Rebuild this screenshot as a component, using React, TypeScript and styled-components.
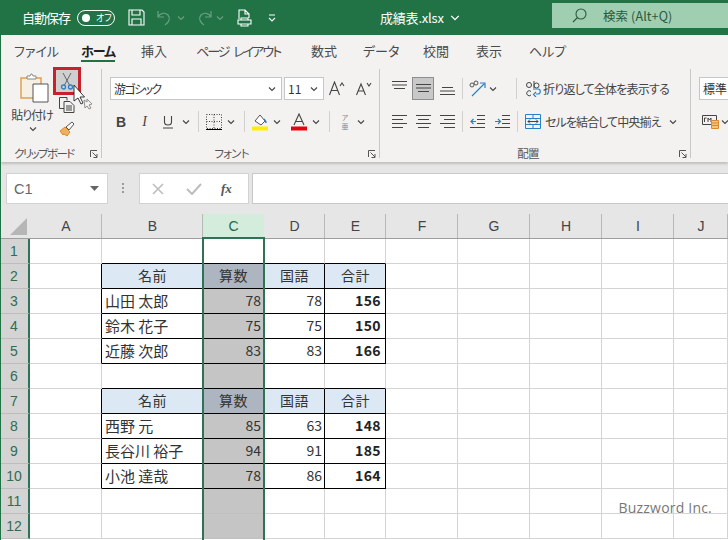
import React from 'react';
import styled, { createGlobalStyle } from 'styled-components';

const GlobalStyle = createGlobalStyle`
  html, body {
    margin: 0;
    width: 728px;
    height: 540px;
    overflow: hidden;
    background: #fff;
  }
  * {
    box-sizing: border-box;
  }
`;

const JP = `"Noto Sans CJK JP", "Liberation Sans", sans-serif`;
const GREEN = '#217346';
const EDGE = '#2f7356';

const Window = styled.div`
  position: relative;
  width: 728px;
  height: 540px;
  overflow: hidden;
  display: flex;
  flex-direction: column;
  border-left: 1px solid ${GREEN};
  font-family: ${JP};
  font-feature-settings: 'palt';
  color: #444;
`;

const TitleBar = styled.div`
  height: 35px;
  margin-left: -1px;
  background: ${GREEN};
  display: flex;
  align-items: center;
  color: #fff;
  flex-shrink: 0;
`;

const TitleText = styled.span<{ $ml: number; $w: number; $spacing?: number }>`
  margin-left: ${(p) => p.$ml}px;
  width: ${(p) => p.$w}px;
  font-size: 13px;
  letter-spacing: ${(p) => p.$spacing ?? 0}px;
  white-space: nowrap;
  line-height: 16px;
  display: flex;
  align-items: center;
  gap: 6px;
`;

const Toggle = styled.div`
  margin-left: 7px;
  width: 38px;
  height: 16px;
  border: 1.2px solid #fff;
  border-radius: 8px;
  display: flex;
  align-items: center;
  padding-left: 4px;
  font-size: 9px;
  gap: 6px;
`;

const Knob = styled.i`
  width: 8px;
  height: 8px;
  border-radius: 50%;
  background: #fff;
`;

const TitleIcon = styled.div<{ $ml: number; $w: number; $dim?: boolean }>`
  margin-left: ${(p) => p.$ml}px;
  width: ${(p) => p.$w}px;
  height: 18px;
  display: flex;
  align-items: center;
  justify-content: center;
  opacity: ${(p) => (p.$dim ? 0.32 : 1)};
`;

const SearchBox = styled.div`
  margin-left: auto;
  width: 176px;
  height: 25px;
  margin-top: -5px;
  background: #9fcfb0;
  color: #2a5a40;
  display: flex;
  align-items: center;
  padding-left: 20px;
  font-size: 12.5px;
`;

const SearchLabel = styled.span`
  margin-left: 16px;
  letter-spacing: 0.1px;
`;

const TabBar = styled.div`
  height: 28px;
  background: #f3f2f1;
  display: flex;
  flex-shrink: 0;
  padding-left: 13px;
  font-size: 13px;
`;

const Tab = styled.div<{ $active?: boolean; $w: number; $spacing: number }>`
  width: ${(p) => p.$w}px;
  height: 28px;
  padding-top: 6px;
  line-height: 20px;
  white-space: nowrap;
  letter-spacing: ${(p) => p.$spacing}px;
  word-spacing: 4px;
  font-weight: ${(p) => (p.$active ? 700 : 400)};
  color: ${(p) => (p.$active ? '#222' : '#4a4a4a')};
  position: relative;
  &::after {
    content: '';
    display: ${(p) => (p.$active ? 'block' : 'none')};
    position: absolute;
    left: 0;
    top: 25px;
    width: 34px;
    height: 2px;
    background: ${GREEN};
  }
`;

const Ribbon = styled.div`
  height: 99px;
  padding: 6px 0 4px;
  background: #f3f2f1;
  display: flex;
  flex-shrink: 0;
  box-shadow: 0 2px 2px rgba(0, 0, 0, 0.16);
  position: relative;
  z-index: 1;
`;

const Group = styled.div<{ $w: number; $noEdge?: boolean }>`
  width: ${(p) => p.$w}px;
  height: 89px;
  flex-shrink: 0;
  border-right: ${(p) => (p.$noEdge ? 'none' : '1px solid #c8c8c8')};
  display: flex;
  flex-direction: column;
  position: relative;
`;

const GroupBody = styled.div`
  flex: 1;
  min-height: 0;
  display: flex;
  flex-direction: column;
  gap: 10px;
  padding: 8px 0 0 8px;
`;

const ClipBody = styled.div`
  flex: 1;
  min-height: 0;
  display: flex;
`;

const PasteColumn = styled.div`
  width: 52px;
  display: flex;
  flex-direction: column;
  align-items: center;
  padding: 4px 0 0 10px;
  font-size: 12px;
  line-height: 14px;
`;

const PasteIcon = styled.svg`
  margin-left: 4px;
  flex-shrink: 0;
`;

const PasteLabel = styled.span`
  margin-top: 5px;
  letter-spacing: -1px;
  white-space: nowrap;
`;

const PasteChevron = styled.div`
  height: 14px;
  margin-left: 2px;
  display: flex;
  align-items: center;
`;

const SmallTools = styled.div`
  width: 28px;
  margin-top: -2px;
  display: flex;
  flex-direction: column;
  align-items: center;
`;

const CutButton = styled.div`
  width: 28px;
  height: 28px;
  border: 3px solid #c8202c;
  background: #cfcfcf;
  display: flex;
  align-items: center;
  justify-content: center;
`;

const SmallTool = styled.div<{ $mt: number }>`
  margin-top: ${(p) => p.$mt}px;
  height: 16px;
  display: flex;
`;

const Row = styled.div`
  display: flex;
  align-items: center;
  height: 23px;
  flex-shrink: 0;
  font-size: 12px;
`;

const Slot = styled.div<{ $w: number; $ml?: number }>`
  width: ${(p) => p.$w}px;
  margin-left: ${(p) => p.$ml ?? 0}px;
  height: 23px;
  flex-shrink: 0;
  display: flex;
  align-items: center;
  justify-content: center;
`;

const BoldGlyph = styled(Slot)`
  font: 700 14px 'Liberation Sans', sans-serif;
`;

const ItalicGlyph = styled(Slot)`
  font: italic 14px 'Liberation Serif', serif;
`;

const RubyGlyph = styled(Slot)`
  flex-direction: column;
  gap: 2px;
  font-size: 7px;
  line-height: 7px;
  color: #888;
`;

const Sep = styled.div<{ $ml: number }>`
  width: 1px;
  height: 21px;
  margin-left: ${(p) => p.$ml}px;
  background: #d0d0d0;
  flex-shrink: 0;
`;

const Combo = styled.div<{ $w: number; $ml?: number }>`
  width: ${(p) => p.$w}px;
  margin-left: ${(p) => p.$ml ?? 0}px;
  height: 23px;
  background: #fff;
  border: 1px solid #c6c6c6;
  display: flex;
  align-items: center;
  justify-content: space-between;
  padding: 0 5px 0 2px;
  font-size: 12px;
  color: #333;
  flex-shrink: 0;
  white-space: nowrap;
`;

const ComboText = styled.span<{ $spacing?: number }>`
  margin-left: 1px;
  letter-spacing: ${(p) => p.$spacing ?? 0}px;
`;

const Pressed = styled(Slot)`
  background: #c8c8c8;
  border: 1px solid #8e8e8e;
`;

const RibbonText = styled.span<{ $ml?: number; $w: number; $spacing: number }>`
  margin-left: ${(p) => p.$ml ?? 0}px;
  width: ${(p) => p.$w}px;
  flex-shrink: 0;
  font-size: 12px;
  white-space: nowrap;
  letter-spacing: ${(p) => p.$spacing}px;
`;

const GroupLabel = styled.div<{ $pr: number }>`
  height: 10px;
  line-height: 10px;
  font-size: 11.5px;
  padding-right: ${(p) => p.$pr}px;
  letter-spacing: -0.8px;
  text-align: center;
  white-space: nowrap;
  color: #555;
  position: relative;
`;

const ClipLabel = styled(GroupLabel)`
  text-align: left;
  padding-left: 13px;
  letter-spacing: -1.6px;
`;

const Launcher = styled.svg`
  position: absolute;
  right: 3px;
  top: 2px;
`;

const CursorOverlay = styled.svg`
  position: absolute;
  left: 72px;
  top: 84px;
  z-index: 3;
`;

const FormulaBar = styled.div`
  height: 52px;
  flex-shrink: 0;
  background: #e6e6e6;
  padding: 11px 0 0 5px;
  display: flex;
  align-items: flex-start;
`;

const NameBox = styled.div`
  width: 102px;
  height: 31px;
  background: #fff;
  border: 1px solid #d2d2d2;
  display: flex;
  align-items: center;
  justify-content: space-between;
  padding: 0 8px 0 7px;
  font: 14.5px 'Liberation Sans', sans-serif;
  color: #666;
`;

const Dots = styled.div`
  width: 31px;
  height: 31px;
  display: flex;
  align-items: center;
  justify-content: center;
`;

const FormulaButtons = styled.div`
  width: 110px;
  height: 31px;
  background: #fff;
  border: 1px solid #d2d2d2;
  display: flex;
  align-items: center;
  padding-left: 9px;
  gap: 18px;
`;

const FxLabel = styled.i`
  font: italic 700 13px 'Liberation Serif', serif;
  color: #555;
`;

const FormulaInput = styled.div`
  margin-left: 3px;
  flex: 1;
  height: 31px;
  background: #fff;
  border: 1px solid #c8c8c8;
  border-right: none;
`;

const Sheet = styled.div`
  position: relative;
  flex: 1;
  display: grid;
  grid-template-columns: 29px 72px 101px 61px 61px 61px 72px 72px 72px 72px 54px;
  grid-template-rows: repeat(13, 25px);
  background: #fff;
`;

const Corner = styled.div`
  background: #e6e6e6;
  border-bottom: 1px solid #9e9e9e;
  display: flex;
  align-items: flex-end;
  justify-content: flex-end;
  padding: 0 3px 3px 0;
`;

const ColHead = styled.div<{ $active?: boolean }>`
  background: ${(p) => (p.$active ? '#d3ecdc' : '#e6e6e6')};
  color: ${(p) => (p.$active ? '#1f6a48' : '#444')};
  border-bottom: 1px solid #9e9e9e;
  font: 14px 'Liberation Sans', sans-serif;
  display: flex;
  align-items: center;
  justify-content: center;
  padding-bottom: 1px;
  position: relative;
  &::after {
    content: '';
    position: absolute;
    right: 0;
    bottom: 0;
    width: 1px;
    height: 24px;
    background: ${(p) => (p.$active ? '#d3ecdc' : '#b8b8b8')};
  }
`;

const RowHead = styled.div`
  background: #d4d4d4;
  color: #2f6d50;
  border-right: 2px solid ${EDGE};
  border-bottom: 1px solid #bdbdbd;
  font: 14px 'Liberation Sans', sans-serif;
  display: flex;
  align-items: center;
  justify-content: center;
  padding: 0 1px 1px 0;
`;

type Tone = 'plain' | 'head' | 'selected' | 'selectedHead';

const toneColor: Record<Tone, string> = {
  plain: 'transparent',
  head: '#dce9f5',
  selected: '#c5c5c5',
  selectedHead: '#adb5c1',
};

const Cell = styled.div<{
  $tone: Tone;
  $align: 'left' | 'right' | 'center';
  $bold?: boolean;
  $right?: boolean;
  $bottom?: boolean;
  $hideGrid?: boolean;
}>`
  background: ${(p) => toneColor[p.$tone]};
  border-right: 1px solid ${(p) => (p.$right ? '#000' : p.$hideGrid ? 'transparent' : '#d4d4d4')};
  border-bottom: 1px solid ${(p) => (p.$bottom ? '#000' : p.$hideGrid ? '#c0c0c0' : '#d4d4d4')};
  display: flex;
  align-items: center;
  justify-content: ${(p) =>
    p.$align === 'left' ? 'flex-start' : p.$align === 'right' ? 'flex-end' : 'center'};
  padding: 0 ${(p) => (p.$bold ? 4 : 2)}px 2px 3px;
  font-size: ${(p) => (p.$align === 'left' ? 15 : 14)}px;
  font-weight: ${(p) => (p.$bold ? 700 : 400)};
  letter-spacing: ${(p) => (p.$bold ? '0.4px' : p.$align === 'center' ? '0.6px' : '0')};
  color: ${(p) => (p.$bold ? '#222' : '#333')};
  font-feature-settings: normal;
  white-space: nowrap;
`;

const Marquee = styled.div`
  position: absolute;
  left: 201px;
  top: 23px;
  bottom: 0;
  width: 63px;
  border: 2px solid ${EDGE};
  border-bottom: none;
  pointer-events: none;
`;

const Watermark = styled.div`
  position: absolute;
  right: 16px;
  bottom: 23px;
  font: 14px 'Open Sans', sans-serif;
  color: #777;
  letter-spacing: 0.2px;
  text-shadow: 0 0 2px #fff;
  z-index: 2;
`;

const Chevron = ({ color = '#444', size = 8 }: { color?: string; size?: number }) => (
  <svg width={size} height={size * 0.75} viewBox="0 0 8 6" fill="none" stroke={color} strokeWidth="1.1">
    <path d="M1 1.5 4 4.5 7 1.5" />
  </svg>
);

const Lines = ({ widths, top = 0 }: { widths: number[]; top?: number }) => (
  <svg width="15" height="15" viewBox="0 0 15 15" stroke="#444" strokeWidth="1">
    {widths.map((w, i) => (
      <path key={i} d={`M${(15 - w) / 2} ${top + i * 3.5 + 0.5}h${w}`} />
    ))}
  </svg>
);

const LeftLines = () => (
  <svg width="15" height="15" viewBox="0 0 15 15" stroke="#444" strokeWidth="1">
    <path d="M0 1.5h15M0 5.5h11M0 9.5h15M0 13.5h11" />
  </svg>
);

const RightLines = () => (
  <svg width="15" height="15" viewBox="0 0 15 15" stroke="#444" strokeWidth="1">
    <path d="M0 1.5h15M4 5.5h11M0 9.5h15M4 13.5h11" />
  </svg>
);

const CenterLines = () => (
  <svg width="15" height="15" viewBox="0 0 15 15" stroke="#444" strokeWidth="1">
    <path d="M0 1.5h15M2 5.5h11M0 9.5h15M2 13.5h11" />
  </svg>
);

const Indent = ({ flip }: { flip?: boolean }) => (
  <svg width="15" height="15" viewBox="0 0 15 15" fill="none">
    <path d="M7 1.5h8M7 5.5h8M7 9.5h8M0 13.5h15" stroke="#444" />
    {flip ? (
      <path d="M0 7.5h5M3 5 5.5 7.5 3 10" stroke="#1e88c8" strokeWidth="1.2" />
    ) : (
      <path d="M6 7.5H1M3.5 5 1 7.5 3.5 10" stroke="#1e88c8" strokeWidth="1.2" />
    )}
  </svg>
);

const launcher = (
  <Launcher width="8" height="8" viewBox="0 0 8 8" fill="none" stroke="#555">
    <path d="M.5 7V.5H7M2.5 2.5 7 7M7 4v3.5H3.5" />
  </Launcher>
);

const tabs: [string, number, number, boolean?][] = [
  ['ファイル', 67, 0],
  ['ホーム', 60, -1, true],
  ['挿入', 55, 0],
  ['ページ レイアウト', 115, -2],
  ['数式', 52, 0],
  ['データ', 60, 0],
  ['校閲', 53, 0],
  ['表示', 53, 0],
  ['ヘルプ', 40, 0],
];

const columns = ['A', 'B', 'C', 'D', 'E', 'F', 'G', 'H', 'I', 'J'];

const tableRows: Record<number, string[]> = {
  2: ['名前', '算数', '国語', '合計'],
  3: ['山田 太郎', '78', '78', '156'],
  4: ['鈴木 花子', '75', '75', '150'],
  5: ['近藤 次郎', '83', '83', '166'],
  7: ['名前', '算数', '国語', '合計'],
  8: ['西野 元', '85', '63', '148'],
  9: ['長谷川 裕子', '94', '91', '185'],
  10: ['小池 達哉', '78', '86', '164'],
};

const headRows = [2, 7];

const renderCell = (row: number, col: number) => {
  const values = tableRows[row];
  const inTable = !!values && col >= 1 && col <= 4;
  const isHead = headRows.includes(row);
  const isC = col === 2;
  const text = inTable ? values[col - 1] : '';

  let tone: Tone = 'plain';
  if (isC && row > 1) tone = inTable && isHead ? 'selectedHead' : 'selected';
  else if (inTable && isHead) tone = 'head';

  let align: 'left' | 'right' | 'center' = 'right';
  if (inTable && isHead) align = 'center';
  else if (col === 1) align = 'left';

  const nextStartsTable = !!tableRows[row + 1] && !values && col >= 1 && col <= 4;
  return (
    <Cell
      key={`${row}-${col}`}
      $tone={tone}
      $align={align}
      $bold={inTable && !isHead && col === 4}
      $right={!!values && col <= 4}
      $bottom={inTable || nextStartsTable}
      $hideGrid={isC && row > 1}
    >
      {text}
    </Cell>
  );
};

const rows = Array.from({ length: 12 }, (_, i) => i + 1);

export default function App() {
  return (
    <>
      <GlobalStyle />
      <Window>
        <TitleBar>
          <TitleText $ml={22} $w={48} $spacing={-1}>
            自動保存
          </TitleText>
          <Toggle>
            <Knob />
            <span>オフ</span>
          </Toggle>
          <TitleIcon $ml={12} $w={18}>
            <svg width="17" height="17" viewBox="0 0 17 17" fill="none" stroke="#fff" strokeWidth="1.1">
              <path d="M1 1h13l2 2v13H1z" />
              <path d="M4 1v5h8V1M4 16v-6h9v6" />
            </svg>
          </TitleIcon>
          <TitleIcon $ml={11} $w={16} $dim>
            <svg width="16" height="16" viewBox="0 0 16 16" fill="none" stroke="#fff" strokeWidth="1.2">
              <path d="M2 1v6h6M2 7c2-4 7-5 10-2 2.500 3 1.500 7-3 10" />
            </svg>
          </TitleIcon>
          <TitleIcon $ml={4} $w={10} $dim>
            <Chevron color="#fff" />
          </TitleIcon>
          <TitleIcon $ml={11} $w={16} $dim>
            <svg width="16" height="16" viewBox="0 0 16 16" fill="none" stroke="#fff" strokeWidth="1.2">
              <path d="M14 1v6H8M14 7C12 3 7 2 4 5c-2.500 3-1.500 7 3 10" />
            </svg>
          </TitleIcon>
          <TitleIcon $ml={2} $w={10} $dim>
            <Chevron color="#fff" />
          </TitleIcon>
          <TitleIcon $ml={11} $w={16}>
            <svg width="15" height="18" viewBox="0 0 15 18" fill="none" stroke="#fff" strokeWidth="1.1">
              <path d="M2 10V1h6l4 4v4M8 1v4h4M1 11h13v4H1zM4 15v2h7v-2M4 11V9h7v2" />
            </svg>
          </TitleIcon>
          <TitleIcon $ml={15} $w={10}>
            <svg width="8" height="8" viewBox="0 0 8 8" fill="none" stroke="#fff" strokeWidth="1.1">
              <path d="M1 1h6M1 4 4 7 7 4" />
            </svg>
          </TitleIcon>
          <TitleText $ml={103} $w={80} $spacing={-0.2}>
            成績表.xlsx
            <Chevron color="#fff" size={10} />
          </TitleText>
          <SearchBox>
            <svg width="15" height="15" viewBox="0 0 15 15" fill="none" stroke="#2a5a40" strokeWidth="1.1">
              <circle cx="9" cy="6" r="5" />
              <path d="M5.500 9.500 1 14" />
            </svg>
            <SearchLabel>検索 (Alt+Q)</SearchLabel>
          </SearchBox>
        </TitleBar>

        <TabBar>
          {tabs.map(([label, width, spacing, active]) => (
            <Tab key={label} $w={width} $spacing={spacing} $active={active}>
              {label}
            </Tab>
          ))}
        </TabBar>

        <Ribbon>
          <Group $w={101}>
            <ClipBody>
              <PasteColumn>
                <PasteIcon width="29" height="30" viewBox="0 0 29 30" fill="none">
                  <path d="M1 5h20v20H1z" fill="#f6f0e4" stroke="#e0a050" strokeWidth="1.5" />
                  <path d="M7 5V3h3l1-2h1l1 2h3v3H7z" fill="#fff" stroke="#888" />
                  <path d="M13 11h15v18H13z" fill="#fff" stroke="#555" />
                </PasteIcon>
                <PasteLabel>貼り付け</PasteLabel>
                <PasteChevron>
                  <Chevron />
                </PasteChevron>
              </PasteColumn>
              <SmallTools>
                <CutButton>
                  <svg width="14" height="18" viewBox="0 0 14 18" fill="none">
                    <path d="M3 1 9.500 13M11 1 4.500 13" stroke="#666" />
                    <circle cx="3.500" cy="15" r="2" stroke="#2a80c8" strokeWidth="1.3" />
                    <circle cx="10.500" cy="15" r="2" stroke="#2a80c8" strokeWidth="1.3" />
                  </svg>
                </CutButton>
                <SmallTool $mt={2}>
                  <svg width="16" height="16" viewBox="0 0 16 16" fill="none" stroke="#444">
                    <path d="M5 11.500H.5V.5H8v3" />
                    <path d="M5 4.500h6l4 4v7H5z" fill="#f3f2f1" />
                    <path d="M7 9h6M7 11h6M7 13h6" />
                  </svg>
                </SmallTool>
                <SmallTool $mt={8}>
                  <svg width="16" height="16" viewBox="0 0 16 16" fill="none">
                    <path d="M1 10 6 6l5 5-3 4-3-2-1 1z" fill="#f0b060" stroke="#d88a30" />
                    <path d="M7 6l6-5 2 2-5 6z" fill="#fff" stroke="#555" />
                  </svg>
                </SmallTool>
              </SmallTools>
            </ClipBody>
            <ClipLabel $pr={0}>
              クリップボード
              {launcher}
            </ClipLabel>
          </Group>

          <Group $w={278}>
            <GroupBody>
              <Row>
                <Combo $w={172}>
                  <ComboText $spacing={-1.6}>游ゴシック</ComboText>
                  <Chevron />
                </Combo>
                <Combo $w={40} $ml={2}>
                  <ComboText>11</ComboText>
                  <Chevron />
                </Combo>
                <Slot $w={16} $ml={5}>
                  <svg width="16" height="15" viewBox="0 0 16 15" fill="none" stroke="#444" strokeWidth="1.1">
                    <path d="M.5 14 5.500 1l5 13M2.500 9.500h6M11 5l2-3 2 3" />
                  </svg>
                </Slot>
                <Slot $w={16} $ml={11}>
                  <svg width="16" height="15" viewBox="0 0 16 15" fill="none" stroke="#444" strokeWidth="1.1">
                    <path d="M.5 14 5 3l4.500 11M2.500 10h5M11 2l2 3 2-3" />
                  </svg>
                </Slot>
              </Row>
              <Row>
                <BoldGlyph $w={22}>B</BoldGlyph>
                <ItalicGlyph $w={25}>I</ItalicGlyph>
                <Slot $w={22}>
                  <svg width="10" height="14" viewBox="0 0 10 14" fill="none" stroke="#444" strokeWidth="1.1">
                    <path d="M1.500 1v6c0 4 7 4 7 0V1M0 13h10" />
                  </svg>
                </Slot>
                <Slot $w={14}>
                  <Chevron />
                </Slot>
                <Sep $ml={5} />
                <Slot $w={19} $ml={5}>
                  <svg width="16" height="16" viewBox="0 0 16 16" fill="none" stroke="#444" strokeDasharray="1 1.500">
                    <path d="M.5 .5h15v14H.5zM8 .5v14M.5 7.500h15" />
                    <path d="M0 15.500h16" stroke="#000" strokeDasharray="none" />
                  </svg>
                </Slot>
                <Slot $w={16}>
                  <Chevron />
                </Slot>
                <Sep $ml={5} />
                <Slot $w={22} $ml={4}>
                  <svg width="16" height="18" viewBox="0 0 16 18" fill="none">
                    <path d="M3 8 8 2l5 6-4 4z" stroke="#555" fill="#fff" />
                    <path d="M12 6c1 1 2 3 2 4" stroke="#2a80c8" strokeWidth="1.5" />
                    <path d="M0 15.500h16" stroke="#ffee00" strokeWidth="4" />
                  </svg>
                </Slot>
                <Slot $w={12}>
                  <Chevron />
                </Slot>
                <Slot $w={24} $ml={4}>
                  <svg width="16" height="18" viewBox="0 0 16 18" fill="none">
                    <path d="M3 12 8 1l5 11M4.500 8.500h7" stroke="#444" strokeWidth="1.1" />
                    <path d="M0 15.500h16" stroke="#e8000f" strokeWidth="4" />
                  </svg>
                </Slot>
                <Slot $w={10}>
                  <Chevron />
                </Slot>
                <Sep $ml={8} />
                <RubyGlyph $w={16} $ml={7}>
                  <span>ア</span>
                  <span>亜</span>
                </RubyGlyph>
                <Slot $w={16}>
                  <Chevron />
                </Slot>
              </Row>
            </GroupBody>
            <GroupLabel $pr={18}>
              フォント
              {launcher}
            </GroupLabel>
          </Group>

          <Group $w={311}>
            <GroupBody>
              <Row>
                <Slot $w={22}>
                  <Lines widths={[15, 15, 11]} />
                </Slot>
                <Pressed $w={22} $ml={2}>
                  <Lines widths={[15, 15, 11]} top={3} />
                </Pressed>
                <Slot $w={22} $ml={2}>
                  <Lines widths={[11, 15, 15]} top={6} />
                </Slot>
                <Sep $ml={4} />
                <Slot $w={23} $ml={3}>
                  <svg width="17" height="17" viewBox="0 0 17 17" fill="none">
                    <path d="M3 16 15 4M11 3h5v5" stroke="#2a80c8" strokeWidth="1.2" />
                    <circle cx="3" cy="5" r="2" stroke="#555" />
                    <circle cx="7" cy="3" r="2" stroke="#555" />
                  </svg>
                </Slot>
                <Slot $w={8}>
                  <Chevron />
                </Slot>
                <Sep $ml={19} />
                <Slot $w={16} $ml={8}>
                  <svg width="15" height="17" viewBox="0 0 15 17" fill="none">
                    <circle cx="3" cy="5" r="2.500" stroke="#444" />
                    <path d="M8 1v7" stroke="#444" />
                    <circle cx="10.500" cy="5.500" r="2.500" stroke="#444" />
                    <path d="M5 11.500a2.500 2.500 0 1 0 0 3.500" stroke="#444" />
                    <path d="M10 14h2c3 0 3-5 0-5H7M10 12l-2.500 2.500L10 17" stroke="#2a80c8" strokeWidth="1.2" />
                  </svg>
                </Slot>
                <RibbonText $ml={2} $w={130} $spacing={-0.8}>
                  折り返して全体を表示する
                </RibbonText>
              </Row>
              <Row>
                <Slot $w={22}>
                  <LeftLines />
                </Slot>
                <Slot $w={22} $ml={2}>
                  <CenterLines />
                </Slot>
                <Slot $w={22} $ml={2}>
                  <RightLines />
                </Slot>
                <Sep $ml={4} />
                <Slot $w={23} $ml={3}>
                  <Indent />
                </Slot>
                <Slot $w={24} $ml={1}>
                  <Indent flip />
                </Slot>
                <Sep $ml={3} />
                <Slot $w={16} $ml={7}>
                  <svg width="16" height="15" viewBox="0 0 16 15" fill="none">
                    <path d="M.5 .5h15v14H.5zM.5 4.500h15M.5 10.500h15M8 .5v4M8 10.500v4" stroke="#2a80c8" />
                    <path d="M3 7.500h10M5 5.500l-2 2 2 2M11 5.500l2 2-2 2" stroke="#444" />
                  </svg>
                </Slot>
                <RibbonText $ml={4} $w={124} $spacing={-0.9}>
                  セルを結合して中央揃え
                </RibbonText>
                <Slot $w={8}>
                  <Chevron />
                </Slot>
              </Row>
            </GroupBody>
            <GroupLabel $pr={14}>
              配置
              {launcher}
            </GroupLabel>
          </Group>

          <Group $w={37} $noEdge>
            <GroupBody>
              <Row>
                <Combo $w={40}>
                  <ComboText>標準</ComboText>
                </Combo>
              </Row>
              <Row>
                <Slot $w={18} $ml={2}>
                  <svg width="17" height="14" viewBox="0 0 17 14" fill="none">
                    <path d="M.5 .5h14v9H.5z" stroke="#444" />
                    <path d="M2.500 7V3h2M6 7V3l1.500 2L9 3v4" stroke="#444" />
                    <path d="M9.500 5.500h7v8h-7z" fill="#f7c27a" stroke="#d88a30" />
                    <path d="M9.500 8h7M9.500 10.500h7" stroke="#d88a30" />
                  </svg>
                </Slot>
                <Slot $w={8} $ml={2}>
                  <Chevron />
                </Slot>
              </Row>
            </GroupBody>
          </Group>
        </Ribbon>
        <CursorOverlay width="22" height="26" viewBox="0 0 22 26">
          <path d="M1 1v16l4-3 3 6 2-1-3-6h4.500z" fill="#fff" stroke="#222" strokeWidth="0.9" />
          <path d="M11 16l3 2 0-3 5 5-3 1 2 3-2 1-2-3-2 2z" fill="#f3f2f1" stroke="#777" strokeWidth="0.8" />
        </CursorOverlay>

        <FormulaBar>
          <NameBox>
            C1
            <svg width="9" height="5" viewBox="0 0 9 5">
              <path d="M0 0h9L4.500 5z" fill="#666" />
            </svg>
          </NameBox>
          <Dots>
            <svg width="3" height="11" viewBox="0 0 3 11" fill="#999">
              <rect x="0" y="0" width="2" height="2" />
              <rect x="0" y="4" width="2" height="2" />
              <rect x="0" y="8" width="2" height="2" />
            </svg>
          </Dots>
          <FormulaButtons>
            <svg width="18" height="12" viewBox="0 0 18 12" fill="none" stroke="#bdbdbd" strokeWidth="1.6">
              <path d="M4 1l10 10M14 1 4 11" />
            </svg>
            <svg width="18" height="12" viewBox="0 0 18 12" fill="none" stroke="#bdbdbd" strokeWidth="2">
              <path d="M2 6l5 5 9-10" />
            </svg>
            <FxLabel>fx</FxLabel>
          </FormulaButtons>
          <FormulaInput />
        </FormulaBar>

        <Sheet>
          <Corner>
            <svg width="17" height="17" viewBox="0 0 17 17">
              <path d="M17 0v17H0z" fill="#b6b6b6" />
            </svg>
          </Corner>
          {columns.map((c) => (
            <ColHead key={c} $active={c === 'C'}>
              {c}
            </ColHead>
          ))}
          {rows.map((row) => (
            <React.Fragment key={row}>
              <RowHead>{row}</RowHead>
              {columns.map((_, col) => renderCell(row, col))}
            </React.Fragment>
          ))}
          <Marquee />
        </Sheet>
        <Watermark>Buzzword Inc.</Watermark>
      </Window>
    </>
  );
}
